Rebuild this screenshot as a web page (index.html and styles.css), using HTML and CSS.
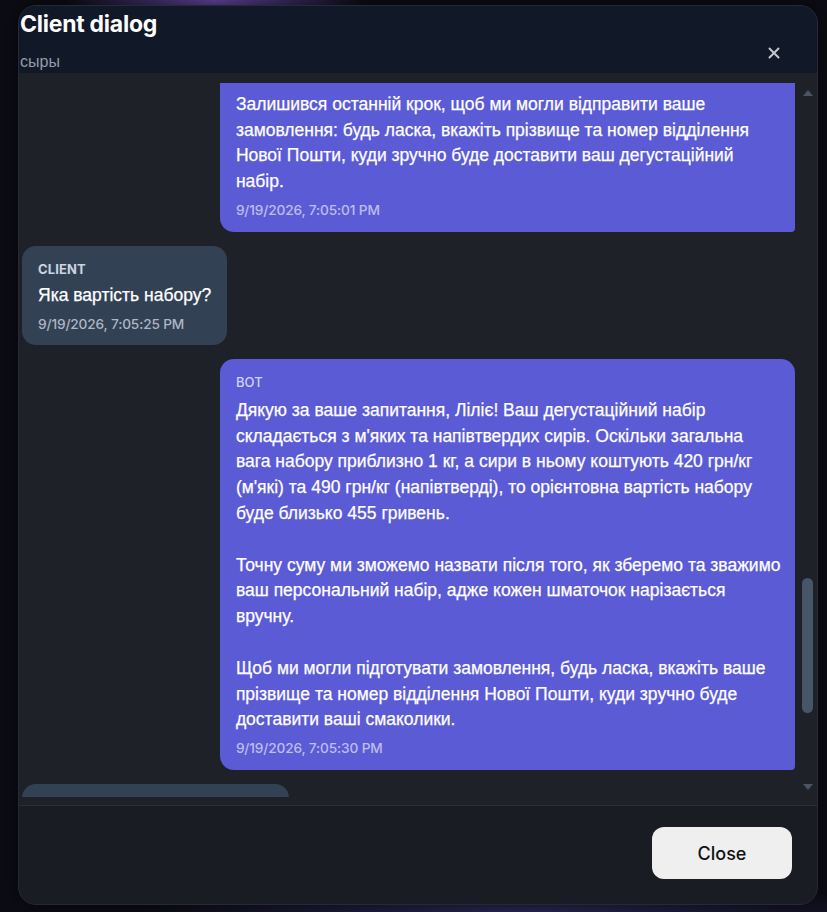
FILE: index.html
```html
<!DOCTYPE html>
<html lang="uk">
<head>
<meta charset="utf-8">
<title>Client dialog</title>
<link rel="stylesheet" href="styles.css">
</head>
<body>
<div class="dialog">
  <header class="dlg-head">
    <div class="head-text">
      <h1 class="title">Client dialog</h1>
      <p class="sub">сыры</p>
    </div>
    <button class="x-btn" aria-label="Close">
      <svg width="12" height="12" viewBox="0 0 12 12"><path d="M1.5 1.5 L10.5 10.5 M10.5 1.5 L1.5 10.5" stroke="currentColor" stroke-width="2" stroke-linecap="round" fill="none"/></svg>
    </button>
  </header>
  <div class="dlg-body">
    <div class="chat" id="chat">
      <div class="msg client"><div class="who">CLIENT</div><div class="text">Добрий день! Хочу замовити дегустаційний набір сирів.</div><div class="time">9/19/2026, 7:01:12 PM</div></div>
      <div class="msg bot"><div class="who">BOT</div><div class="text">Вітаємо! Дякуємо за інтерес до нашої сироварні. Ми з радістю допоможемо вам обрати дегустаційний набір.<br><br>Підкажіть, будь ласка, як до вас звертатися та які сири вам подобаються найбільше: м'які, напівтверді чи тверді?</div><div class="time">9/19/2026, 7:01:18 PM</div></div>
      <div class="msg client"><div class="who">CLIENT</div><div class="text">Мене звати Лілія. Люблю м'які та напівтверді сири.</div><div class="time">9/19/2026, 7:01:54 PM</div></div>
      <div class="msg bot"><div class="who">BOT</div><div class="text">Дуже приємно, Ліліє! Чудовий вибір. У нашому асортименті є камамбер, брі та бюш з козиного молока, а також напівтверді сири — гауда, качота та сир з пажитником.<br><br>Ми зберемо для вас набір з кількох видів, щоб ви змогли спробувати різні смаки та текстури.</div><div class="time">9/19/2026, 7:02:01 PM</div></div>
      <div class="msg client"><div class="who">CLIENT</div><div class="text">А з якого молока ви робите сири?</div><div class="time">9/19/2026, 7:02:30 PM</div></div>
      <div class="msg bot"><div class="who">BOT</div><div class="text">Ми використовуємо лише натуральне коров'яче та козине молоко від перевірених фермерських господарств нашого регіону. Молоко надходить свіжим щоранку.<br><br>У наших сирах немає консервантів, барвників чи рослинних жирів — лише молоко, закваска, фермент і сіль.</div><div class="time">9/19/2026, 7:02:36 PM</div></div>
      <div class="msg client"><div class="who">CLIENT</div><div class="text">Скільки зберігаються сири?</div><div class="time">9/19/2026, 7:03:05 PM</div></div>
      <div class="msg bot"><div class="who">BOT</div><div class="text">М'які сири з білою пліснявою найкраще спожити протягом 10–14 днів, а напівтверді сири зберігаються до одного місяця в холодильнику при температурі +2…+6 °C.<br><br>Радимо зберігати сири у пергаменті, щоб вони могли «дихати» і не вбирали сторонніх запахів.</div><div class="time">9/19/2026, 7:03:11 PM</div></div>
      <div class="msg client"><div class="who">CLIENT</div><div class="text">Чи можна додати до набору мед або горіхи?</div><div class="time">9/19/2026, 7:03:40 PM</div></div>
      <div class="msg bot"><div class="who">BOT</div><div class="text">Так, звісно! До набору ми можемо додати квітковий мед, волоські горіхи, інжирний джем або журавлиний соус. Вони чудово підкреслюють смак м'яких і напівтвердих сирів.<br><br>Вартість доповнень ми повідомимо разом із загальною вартістю замовлення.</div><div class="time">9/19/2026, 7:03:46 PM</div></div>
      <div class="msg client"><div class="who">CLIENT</div><div class="text">Ні, дякую, тільки сири.</div><div class="time">9/19/2026, 7:04:10 PM</div></div>
      <div class="msg bot"><div class="who">BOT</div><div class="text">Добре, Ліліє! Тоді ваш набір буде складатися лише з м'яких та напівтвердих сирів загальною вагою приблизно 1 кг.</div><div class="time">9/19/2026, 7:04:15 PM</div></div>
      <div class="msg client"><div class="who">CLIENT</div><div class="text">Як відбувається доставка?</div><div class="time">9/19/2026, 7:04:32 PM</div></div>
      <div class="msg bot"><div class="who">BOT</div><div class="text">Ми відправляємо замовлення Новою Поштою по всій Україні. Сири пакуються у термосумку з охолоджувальними елементами, тож вони прибудуть до вас у відмінному стані.<br><br>Зазвичай доставка займає 1–2 дні. Оплатити замовлення можна при отриманні.</div><div class="time">9/19/2026, 7:04:38 PM</div></div>
      <div class="msg client"><div class="who">CLIENT</div><div class="text">Добре, мені підходить.</div><div class="time">9/19/2026, 7:04:55 PM</div></div>
      <div class="msg bot" id="anchor"><div class="who">BOT</div><div class="text">Залишився останній крок, щоб ми могли відправити ваше замовлення: будь ласка, вкажіть прізвище та номер відділення Нової Пошти, куди зручно буде доставити ваш дегустаційний набір.</div><div class="time">9/19/2026, 7:05:01 PM</div></div>
      <div class="msg client"><div class="who">CLIENT</div><div class="text">Яка вартість набору?</div><div class="time">9/19/2026, 7:05:25 PM</div></div>
      <div class="msg bot"><div class="who">BOT</div><div class="text">Дякую за ваше запитання, Ліліє! Ваш дегустаційний набір складається з м'яких та напівтвердих сирів. Оскільки загальна<br>вага набору приблизно 1 кг, а сири в ньому коштують 420 грн/кг (м'які) та 490 грн/кг (напівтверді), то орієнтовна вартість набору буде близько 455 гривень.<br><br>Точну суму ми зможемо назвати після того, як зберемо та зважимо ваш персональний набір, адже кожен шматочок нарізається вручну.<br><br>Щоб ми могли підготувати замовлення, будь ласка, вкажіть ваше прізвище та номер відділення Нової Пошти, куди зручно буде доставити ваші смаколики.</div><div class="time">9/19/2026, 7:05:30 PM</div></div>
      <div class="msg client"><div class="who">CLIENT</div><div class="text">Коваленко, відділення №127</div><div class="time">9/19/2026, 7:06:02 PM</div></div>
      <div class="msg bot"><div class="who">BOT</div><div class="text">Дякуємо, Ліліє! Ми отримали ваші дані: прізвище Коваленко, відділення Нової Пошти № 127.<br><br>Найближчим часом ми зберемо та зважимо ваш набір, а потім надішлемо вам точну суму до оплати та номер ТТН для відстеження посилки.</div><div class="time">9/19/2026, 7:06:08 PM</div></div>
    </div>
    <div class="vscroll" aria-hidden="true">
      <div class="sb-btn"><svg width="10" height="6" viewBox="0 0 10 6"><polygon points="5,0 10,6 0,6" fill="#4b5563"/></svg></div>
      <div class="sb-track" id="track"><div class="sb-thumb" id="thumb"></div></div>
      <div class="sb-btn"><svg width="10" height="6" viewBox="0 0 10 6"><polygon points="0,0 10,0 5,6" fill="#4b5563"/></svg></div>
    </div>
  </div>
  <footer class="dlg-foot">
    <button class="close">Close</button>
  </footer>
</div>
<script src="script.js"></script>
</body>
</html>
```

FILE: styles.css
```css
html, body {
  margin: 0;
}
body {
  height: 912px;
  overflow: hidden;
  box-sizing: border-box;
  padding: 5px 0 0 18px;
  font-family: "Liberation Sans", Arial, sans-serif;
  background:
    radial-gradient(ellipse 150px 55px at 215px 0, rgba(125, 85, 205, 0.8), rgba(125, 85, 205, 0) 100%),
    radial-gradient(ellipse 380px 30px at 520px 912px, rgba(75, 65, 150, 0.55), rgba(75, 65, 150, 0) 100%),
    #0c0c14;
}
.dialog {
  width: 800px;
  height: 900px;
  box-sizing: border-box;
  border: 1px solid #262a36;
  border-radius: 18px;
  overflow: hidden;
  display: flex;
  flex-direction: column;
  background: #1f2129;
  box-shadow: 0 0 24px rgba(0, 0, 0, 0.6);
}
.dlg-head {
  flex: none;
  height: 67px;
  box-sizing: border-box;
  padding: 5px 0 0 1px;
  background: #111827;
  display: flex;
  justify-content: space-between;
  align-items: flex-start;
}
.title {
  margin: 0;
  font: 700 23px/26px Inter, sans-serif;
  letter-spacing: -0.25px;
  color: #ffffff;
}
.sub {
  margin: 15px 0 0;
  font: 16px/20px "Liberation Sans", Arial, sans-serif;
  color: #959ca8;
}
.x-btn {
  width: 24px;
  height: 24px;
  margin: 30px 31px 0 0;
  padding: 0;
  border: 0;
  background: transparent;
  color: #c3c7cf;
  display: flex;
  align-items: center;
  justify-content: center;
}
.dlg-body {
  flex: 1;
  min-height: 0;
  display: flex;
  padding: 10px 2px 8px 0;
}
.chat {
  flex: 1;
  min-width: 0;
  position: relative;
  overflow-y: scroll;
  scrollbar-width: none;
  display: flex;
  flex-direction: column;
  gap: 14px;
  padding: 10px 5px 10px 3px;
}
.chat::-webkit-scrollbar {
  display: none;
}
.vscroll {
  flex: none;
  width: 15px;
  display: flex;
  flex-direction: column;
}
.sb-btn {
  flex: none;
  height: 20px;
  display: flex;
  align-items: center;
  justify-content: center;
}
.sb-track {
  flex: 1;
}
.sb-thumb {
  width: 11px;
  margin-left: 2px;
  border-radius: 6px;
  background: #475569;
}
.msg {
  flex: none;
  box-sizing: border-box;
  border-radius: 14px;
  padding: 14px 10px 13px 16px;
}
.msg.bot {
  align-self: flex-end;
  width: 74.4%;
  background: #5b5bd6;
  border-bottom-right-radius: 4px;
}
.msg.client {
  align-self: flex-start;
  max-width: 74.4%;
  padding: 14px 16px 12px;
  background: #334155;
}
.who {
  margin-bottom: 7px;
  font: 700 13px/18px Inter, sans-serif;
  letter-spacing: 0.1px;
}
.client .who {
  color: #cbd5e1;
  margin-bottom: 5px;
}
.bot .who {
  color: #d2d2f6;
  font-weight: 500;
}
.text {
  font-size: 17.5px;
  line-height: 25.8px;
  color: #ffffff;
  -webkit-text-stroke: 0.25px #ffffff;
}
.time {
  margin-top: 6px;
  font: 500 13.7px/18px Inter, sans-serif;
  letter-spacing: -0.15px;
}
.bot .time {
  color: rgba(255, 255, 255, 0.6);
}
.client .time {
  color: #aeb6c4;
}
.dlg-foot {
  flex: none;
  height: 99px;
  box-sizing: border-box;
  border-top: 1px solid #2a2d37;
  background: #1a1c23;
  display: flex;
  justify-content: flex-end;
  align-items: flex-start;
  padding: 21px 25px 0 0;
}
.close {
  width: 140px;
  height: 52px;
  border: 0;
  border-radius: 12px;
  background: #efefef;
  color: #111111;
  font: 500 18px Inter, sans-serif;
}
```

FILE: script.js
```js
(function () {
  var chat = document.getElementById('chat');
  var anchor = document.getElementById('anchor');
  var track = document.getElementById('track');
  var thumb = document.getElementById('thumb');
  function place() {
    chat.scrollTop = anchor.offsetTop + 30;
    var th = track.clientHeight;
    var total = chat.scrollHeight;
    var h = Math.max(24, th * chat.clientHeight / total);
    var t = (th - h) * chat.scrollTop / (total - chat.clientHeight);
    thumb.style.height = h + 'px';
    thumb.style.marginTop = t + 'px';
  }
  place();
  window.addEventListener('load', place);
  if (document.fonts && document.fonts.ready) {
    document.fonts.ready.then(place);
  }
})();
```
